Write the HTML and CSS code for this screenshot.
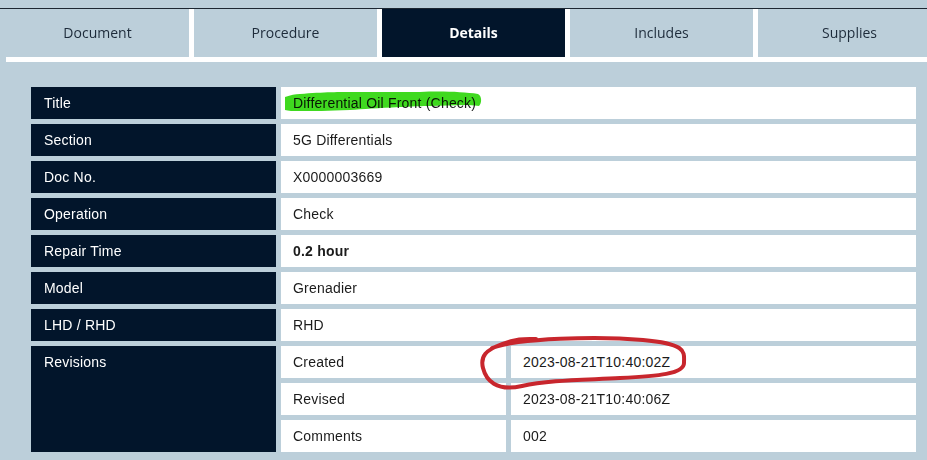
FILE: index.html
```html
<!DOCTYPE html>
<html lang="en">
<head>
    <meta charset="UTF-8">
    <meta name="viewport" content="width=device-width, initial-scale=1.0">
    <title>Details</title>
    <link rel="stylesheet" href="styles.css">
</head>
<body>
    <div class="topbar"></div>

    <div class="page">
        <nav class="tabs">
            <div class="tab">Document</div>
            <div class="tab">Procedure</div>
            <div class="tab active">Details</div>
            <div class="tab">Includes</div>
            <div class="tab">Supplies</div>
        </nav>

        <section class="panel">
            <div class="details">
                <div class="label">Title</div>
                <div class="value wide marked">
                    Differential Oil Front (Check)
                    <svg class="marker" width="201" height="22" viewBox="0 0 201 22">
                        <path d="M2 6 C8 4, 12 3, 17 3 C40 1, 60 1, 67 1 L137 1 C160 0, 180 1, 195 3 C199 5, 199 12, 196 15 C190 14, 186 14, 182 14 L147 15 C130 15, 125 16, 117 16 C95 17, 80 18, 67 19 C45 20, 30 20, 17 20 C10 20, 5 20, 2 19 Z" />
                    </svg>
                </div>

                <div class="label">Section</div>
                <div class="value wide">5G Differentials</div>

                <div class="label">Doc No.</div>
                <div class="value wide">X0000003669</div>

                <div class="label">Operation</div>
                <div class="value wide">Check</div>

                <div class="label">Repair Time</div>
                <div class="value wide"><strong>0.2 hour</strong></div>

                <div class="label">Model</div>
                <div class="value wide">Grenadier</div>

                <div class="label">LHD / RHD</div>
                <div class="value wide">RHD</div>

                <div class="label revisions">Revisions</div>
                <div class="value">Created</div>
                <div class="value circled">
                    2023-08-21T10:40:02Z
                    <svg class="circle" width="212" height="58" viewBox="0 0 212 58">
                        <path d="M14 14 C40 4, 120 2, 165 6 S206 18, 206 29 S180 42, 142 44 S70 46, 44 52 S8 46, 5 34 S8 16, 24 10 S48 5, 58 5" />
                    </svg>
                </div>
                <div class="value">Revised</div>
                <div class="value">2023-08-21T10:40:06Z</div>
                <div class="value">Comments</div>
                <div class="value">002</div>
            </div>
        </section>
    </div>
</body>
</html>
```

FILE: styles.css
```css
/* Geral */
body {
    margin: 0;
    background-color: #bccfda;
    font-family: 'Liberation Sans', Arial, sans-serif;
    font-size: 14px;
    overflow: hidden;
}

.topbar {
    height: 8px;
    border-bottom: 1px solid #1c2631;
}

.page {
    margin-left: 6px;
    width: 935px;
}

/* Abas */
.tabs {
    display: flex;
    gap: 5px;
    padding-bottom: 5px;
    background-color: #fff;
}
.tab {
    flex: 1;
    height: 48px;
    line-height: 47px;
    text-align: center;
    background-color: #bccfda;
    color: #1d2b3a;
    font-family: 'Open Sans', sans-serif;
    font-size: 14px;
}
.tab.active {
    background-color: #02152b;
    color: #fff;
    font-weight: bold;
}

/* Tabela de detalhes */
.panel {
    padding: 25px;
}
.details {
    display: grid;
    grid-template-columns: 245px 225px 405px;
    grid-auto-rows: 32px;
    gap: 5px;
    letter-spacing: 0.2px;
}
.label {
    background-color: #02152b;
    color: #fff;
    padding: 0 13px;
    line-height: 32px;
}
.label.revisions {
    grid-row: span 3;
}
.value {
    background-color: #fff;
    color: #1b1b1b;
    padding: 0 12px;
    line-height: 32px;
}
.value.wide {
    grid-column: span 2;
}
.value strong {
    font-weight: bold;
}

/* Marcações */
.marked,
.circled {
    position: relative;
}
.marker {
    position: absolute;
    left: 2px;
    top: 4px;
    mix-blend-mode: multiply;
}
.marker path {
    fill: #3fd91f;
}
.circle {
    position: absolute;
    left: -33px;
    top: -12px;
}
.circle path {
    fill: none;
    stroke: #c8262d;
    stroke-width: 4;
    stroke-linecap: round;
}
```
